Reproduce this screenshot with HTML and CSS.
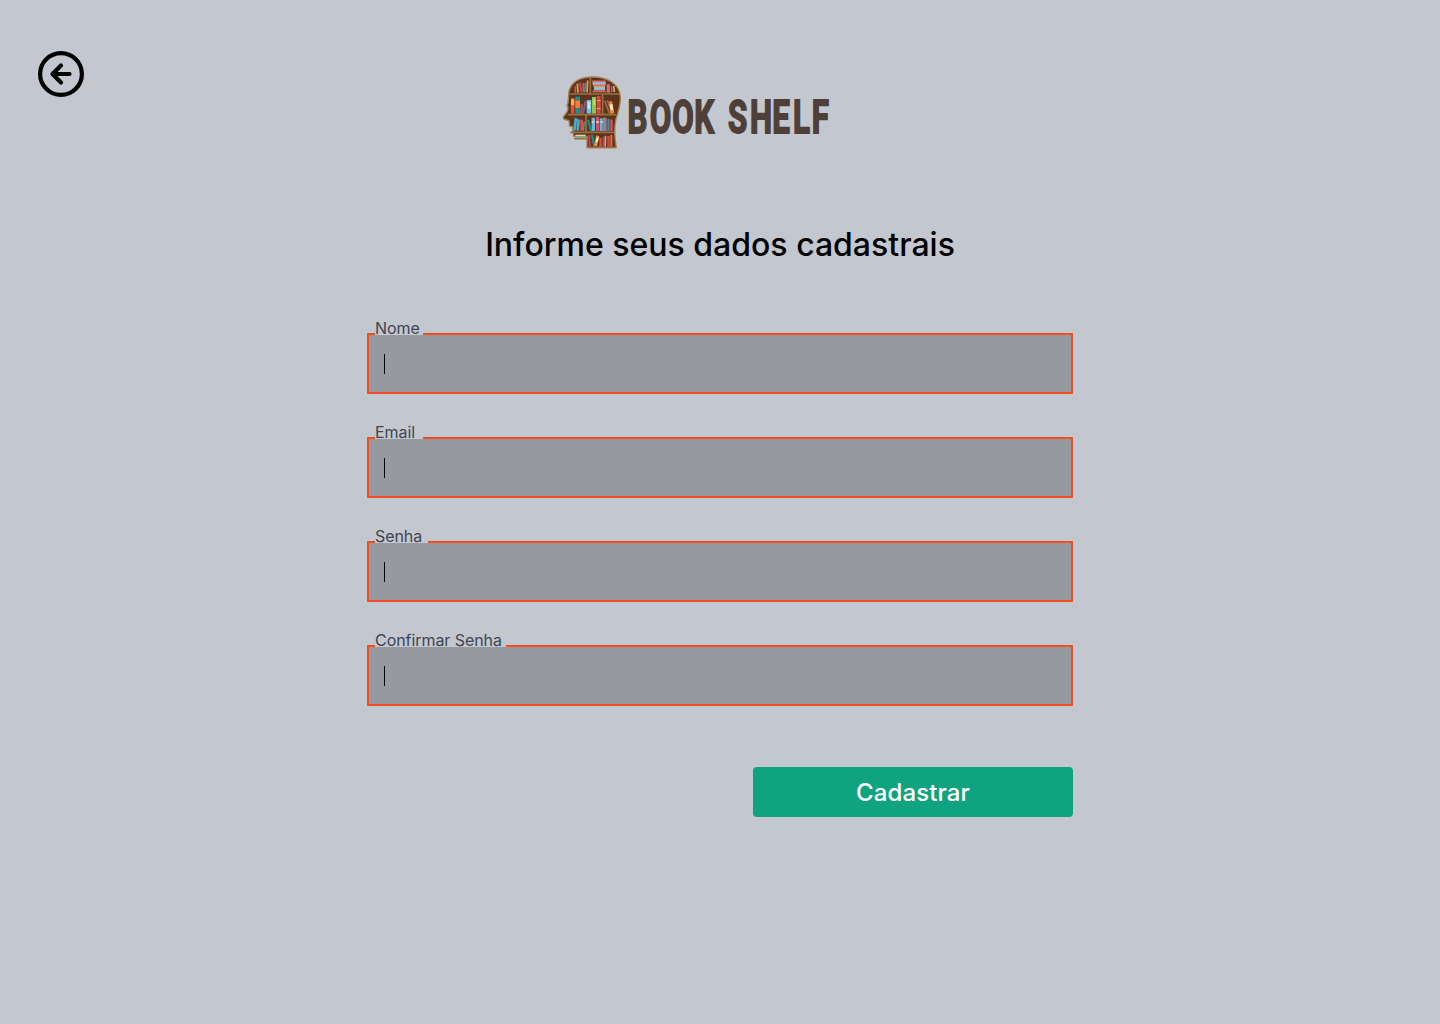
FILE: index.html
```html
<!DOCTYPE html>
<html lang="pt-BR">
<head>
<meta charset="utf-8">
<title>Book Shelf - Cadastro</title>
<link rel="stylesheet" href="styles.css">
</head>
<body>
<header class="header">
  <a class="back" href="#" aria-label="Voltar">
    <svg width="46" height="46" viewBox="0 0 46 46" fill="none" stroke="#000" stroke-width="4.2" stroke-linecap="round" stroke-linejoin="round"><circle cx="23" cy="23" r="20.9"/><path d="M31.5 23H15M23 14.5 14.5 23l8.500 8.500"/></svg>
  </a>
  <div class="logo">
    <svg class="head" width="75" height="85" viewBox="0 0 225 255">
      <path d="M41 74C42 43 68 22 108 21c50-1 85 21 88 59 2 26-9 49-14 72-4 20-5 41 2 81H96v-34H56l-4-30H44l-2-17-16-5-1-7c8-8 15-20 14-27l-3-8 3-7Z" fill="#5b3420" stroke="#a77e4c" stroke-width="4" stroke-linejoin="round"/>
      <path d="M61 49v19M85 39v28M162 42v25" stroke="#e94b50" stroke-width="5"/>
      <path d="m67 41 2 27M98 32l-2 35M176 48l2 18" stroke="#f0a449" stroke-width="5"/>
      <path d="m75 37 4 30" stroke="#ba4658" stroke-width="7"/>
      <path d="m91 39-2 28M170 49v18" stroke="#4d9fae" stroke-width="4"/>
      <path d="M113 33h39v12h-39zM117 51h33v10h-33z" fill="#87c7e2"/>
      <path d="M112 34h39M114 46h38M113 64h39" stroke="#e56561" stroke-width="5"/>
      <path d="M116 50h34" stroke="#ef984f" stroke-width="4"/>
      <path d="M155 43h9v25h-9z" fill="#e06875"/>
      <path d="M48 84h10v47H48z" fill="#ed4c34"/><path d="M48 88h10v18H48z" fill="#ffad53"/>
      <path d="M61 80h14v51H61z" fill="#13958d"/><path d="M61 92h14v22H61z" fill="#f47b30"/>
      <path d="m77 101 7 2-1 28h-8z" fill="#a54e63"/><path d="m89 92 6 2-8 37h-7z" fill="#6b6480"/>
      <path d="M95 90h14v41H95z" fill="#70bfe3"/><path d="M98 96h8v21h-8z" fill="#c8e6e9"/>
      <path d="M111 81h12v50h-12z" fill="#8cc64b"/><path d="M114 88h6v17h-6z" fill="#c2df60"/>
      <path d="M125 78h12v53h-12z" fill="#d94647"/><path d="M125 92h12M125 116h12" stroke="#f2ad70" stroke-width="3"/>
      <path d="m149 92 14 38M157 91l12 33" stroke="#a16c4b" stroke-width="5"/>
      <path d="m162 95 9-2 7 36-12 3z" fill="#f68832"/><path d="m164 104 8-2 3 17-8 2z" fill="#fff0cb"/>
      <path d="m63 144-5 38M71 148l-3 34" stroke="#45acd2" stroke-width="8"/>
      <path d="M80 149v33" stroke="#e34e4b" stroke-width="8"/><path d="m88 154-3 28" stroke="#419b78" stroke-width="5"/>
      <path d="m99 150 9 32" stroke="#0c9892" stroke-width="6"/>
      <path d="M110 143h10v40h-10zM134 145h9v38h-9z" fill="#6bb4d5"/>
      <path d="M123 141h9v42h-9z" fill="#d84d65"/><path d="M144 143h11v40h-11z" fill="#8c82a5"/>
      <path d="M157 147h7v36h-7z" fill="#4b889e"/><path d="M166 149h7v34h-7z" fill="#dc505b"/>
      <path d="M110 156h34" stroke="#d7d9cc" stroke-width="5" stroke-dasharray="9 4"/>
      <path d="M61 196h31" stroke="#e1d6a0" stroke-width="4"/><path d="M60 201h33" stroke="#5eb8a4" stroke-width="4"/>
      <path d="m102 195 3 34" stroke="#c83f55" stroke-width="6"/><path d="m111 194 7 35" stroke="#168e8a" stroke-width="7"/>
      <path d="m124 196 9 2-7 31-9-2z" fill="#f19431"/><path d="m125 202 6 1-3 13-6-1z" fill="#fff0cb"/>
      <path d="M133 204h7v26h-7z" fill="#d34d4b"/><path d="M143 200h7v30h-7z" fill="#b44b62"/>
      <path d="m152 197-1 33" stroke="#e9a052" stroke-width="4"/><path d="M157 198h7v32h-7z" fill="#db453d"/><path d="M166 195h6v35h-6z" fill="#d87545"/>
      <path d="M44 72h150M38 134h145M46 187h133M57 206h38M106 23v48M143 72v62M93 135v51M98 232h82" stroke="#9a713d" stroke-width="5" fill="none"/>
    </svg>
    <svg class="wordmark" width="210" height="60" viewBox="0 0 210 60">
      <g transform="scale(.68 1)">
        <text x="-.6 32 65.200 97.300" y="48">BOOK</text>
        <text x="147 179.300 212.300 242.600 270.300" y="48">SHELF</text>
      </g>
    </svg>
  </div>
</header>
<main class="main">
  <h1 class="title">Informe seus dados cadastrais</h1>
  <form class="form">
    <div class="field"><label class="label" for="nome">Nome</label><div class="input" id="nome"><span class="caret"></span></div></div>
    <div class="field"><label class="label" for="email">Email</label><div class="input" id="email"><span class="caret"></span></div></div>
    <div class="field"><label class="label label-senha" for="senha">Senha</label><div class="input" id="senha"><span class="caret"></span></div></div>
    <div class="field"><label class="label label-confirmar" for="confirmar">Confirmar Senha</label><div class="input" id="confirmar"><span class="caret"></span></div></div>
    <button class="submit" type="button">Cadastrar</button>
  </form>
</main>
</body>
</html>
```
FILE: styles.css
```css
* { box-sizing: border-box; }
body {
  margin: 0;
  min-height: 1024px;
  background: #c3c7cf;
  font-family: Inter, sans-serif;
  color: #000;
}
.header {
  display: flex;
  align-items: flex-start;
  height: 225px;
  padding: 51px 38px 0;
}
.back { display: block; width: 46px; height: 46px; }
.back svg, .logo svg { display: block; }
.logo { display: flex; margin: 19px 0 0 471px; }
.wordmark { margin: 15px 0 0 -2px; overflow: visible; }
.wordmark text {
  font: 700 46px Roboto, sans-serif;
  fill: #4e3f39;
  stroke: #4e3f39;
  stroke-width: 1.8px;
}
.main { width: 706px; margin: 0 auto; }
.title {
  margin: 0;
  font-size: 32px;
  font-weight: 500;
  line-height: 40px;
  text-align: center;
  white-space: nowrap;
}
.form { display: flex; flex-direction: column; padding-top: 53px; }
.field { display: flex; flex-direction: column; height: 104px; }
.label {
  z-index: 1;
  align-self: flex-start;
  width: 48px;
  height: 17px;
  margin: 0 0 -2px 8px;
  background: #c3c7cf;
  color: #404452;
  font-size: 16px;
  line-height: 20px;
  letter-spacing: -.06px;
  white-space: nowrap;
}
.label-senha { width: 53px; }
.label-confirmar { width: 131px; }
.input {
  display: flex;
  align-items: center;
  height: 61px;
  padding-left: 15px;
  border: 2px solid #f24e1e;
  background: #969a9e;
}
.caret { width: 1px; height: 20px; background: #000; }
.submit {
  align-self: flex-end;
  width: 320px;
  height: 50px;
  margin-top: 33px;
  padding: 2px 0 0;
  border: 0;
  border-radius: 4px;
  background: #10a37f;
  color: #fff;
  font: 500 24px/48px Inter, sans-serif;
  letter-spacing: .1px;
}
```
